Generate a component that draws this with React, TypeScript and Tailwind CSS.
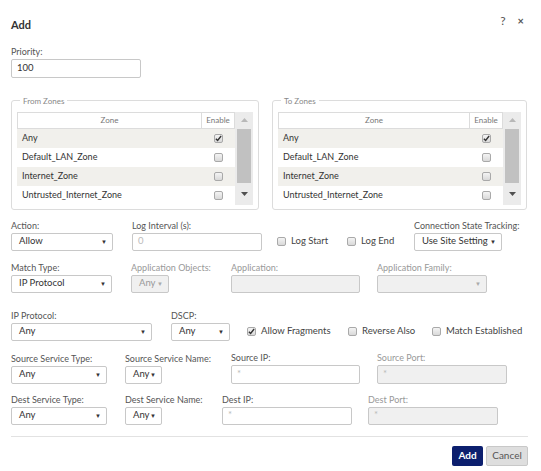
import React from "react";

const font = { fontFamily: "Lato, 'Open Sans', sans-serif" };

function Check({ checked = false }: { checked?: boolean }) {
  return (
    <span className="inline-flex h-[9px] w-[9px] shrink-0 items-center justify-center rounded-[2px] border border-[#a9a9a9] bg-gradient-to-b from-[#f4f4f4] to-[#d9d9d9]">
      {checked && (
        <svg width="7" height="7" viewBox="0 0 8 8">
          <path d="M1 4.2 L3 6.2 L7 1.2" fill="none" stroke="#333" strokeWidth="1.6" />
        </svg>
      )}
    </span>
  );
}

function Select({ value, w, disabled = false }: { value: string; w: string; disabled?: boolean }) {
  return (
    <div
      className={`flex h-[18px] items-center justify-between whitespace-nowrap rounded-[2px] border border-[#c8c8c8] pl-[7px] pr-[5px] text-[9.5px] ${w} ${
        disabled ? "bg-[#f0f0f0] text-[#999]" : "bg-white text-[#333]"
      }`}
    >
      <span>{value}</span>
      <span className={`text-[6px] ${disabled ? "text-[#aaa]" : "text-[#333]"}`}>▼</span>
    </div>
  );
}

function Input({ value, w, disabled = false, dim = false }: { value: string; w: string; disabled?: boolean; dim?: boolean }) {
  return (
    <div
      className={`flex h-[18px] items-center rounded-[2px] border border-[#c8c8c8] pl-[5px] text-[9.5px] ${w} ${
        disabled ? "bg-[#f0f0f0]" : "bg-white"
      } ${dim ? "text-[#bbb]" : "text-[#333]"}`}
    >
      {value}
    </div>
  );
}

function Field({ label, w, gray = false, children }: { label: string; w?: string; gray?: boolean; children: React.ReactNode }) {
  return (
    <div className={`flex shrink-0 flex-col ${w ?? ""}`}>
      <div className={`mb-[2px] whitespace-nowrap text-[9px] leading-[11px] ${gray ? "text-[#999]" : "text-[#555]"}`}>{label}</div>
      {children}
    </div>
  );
}

function CheckLabel({ label, w, checked = false }: { label: string; w?: string; checked?: boolean }) {
  return (
    <div className={`flex h-[18px] shrink-0 items-center gap-[5px] whitespace-nowrap text-[9.5px] text-[#444] ${w ?? ""}`}>
      <Check checked={checked} />
      <span>{label}</span>
    </div>
  );
}

function Zones({ title }: { title: string }) {
  const rows = ["Any", "Default_LAN_Zone", "Internet_Zone", "Untrusted_Internet_Zone"];
  return (
    <fieldset className="h-[114px] rounded-[3px] border border-[#dcdcdc] px-[5px] pt-0">
      <legend className="ml-[3px] px-[3px] text-[8px] leading-[10px] text-[#888]">{title}</legend>
      <div className="mt-[6px] flex">
        <div className="flex-1">
          <div className="flex h-[17px] border border-[#dcdcdc] text-[8px] text-[#777]">
            <div className="flex flex-1 items-center justify-center">Zone</div>
            <div className="flex w-[33px] items-center justify-center border-l border-[#dcdcdc]">Enable</div>
          </div>
          {rows.map((r, i) => (
            <div key={r} className={`flex h-[19px] text-[9px] text-[#333] ${i % 2 === 0 ? "bg-[#f1f0ec]" : "bg-white"}`}>
              <div className="flex flex-1 items-center pl-[5px]">{r}</div>
              <div className="flex w-[33px] items-center justify-center">
                <Check checked={i === 0} />
              </div>
            </div>
          ))}
        </div>
        <div className="flex h-[93px] w-[18px] flex-col items-center bg-[#ebebeb]">
          <div className="flex h-[17px] items-center">
            <svg width="7" height="4" viewBox="0 0 7 4"><path d="M0 4 L3.5 0 L7 4 Z" fill="#b8b8b8" /></svg>
          </div>
          <div className="h-[54px] w-[14px] bg-[#c1c1c1]" />
          <div className="flex flex-1 items-center">
            <svg width="7" height="4" viewBox="0 0 7 4"><path d="M0 0 L7 0 L3.5 4 Z" fill="#505050" /></svg>
          </div>
        </div>
      </div>
    </fieldset>
  );
}

export default function App() {
  return (
    <div className="relative h-[471px] w-[541px] overflow-hidden bg-white" style={font}>
      <div className="flex items-center justify-between pl-[11px] pr-[17px] pt-[9px]">
        <div className="mt-[8px] text-[11px] font-bold text-[#333]">Add</div>
        <div className="flex items-center gap-[12px] text-[#555]">
          <span className="text-[12px]">?</span>
          <span className="text-[11px] font-bold">×</span>
        </div>
      </div>

      <div className="px-[11px]">
        <div className="mt-[12px]">
          <Field label="Priority:">
            <Input value="100" w="w-[130px] h-[19px]" />
          </Field>
        </div>

        <div className="mt-[18px] flex gap-[13px]">
          <div className="w-[248px]">
            <Zones title="From Zones" />
          </div>
          <div className="w-[255px]">
            <Zones title="To Zones" />
          </div>
        </div>

        <div className="mt-[10px] flex items-end">
          <Field label="Action:" w="w-[121px]">
            <Select value="Allow" w="w-[102px]" />
          </Field>
          <Field label="Log Interval (s):" w="w-[145px]">
            <Input value="0" w="w-[130px]" dim />
          </Field>
          <CheckLabel label="Log Start" w="w-[70px]" />
          <CheckLabel label="Log End" w="w-[67px]" />
          <Field label="Connection State Tracking:">
            <Select value="Use Site Setting" w="w-[88px]" />
          </Field>
        </div>

        <div className="mt-[11px] flex items-end">
          <Field label="Match Type:" w="w-[120px]">
            <Select value="IP Protocol" w="w-[101px]" />
          </Field>
          <Field label="Application Objects:" w="w-[100px]" gray>
            <Select value="Any" w="w-[38px]" disabled />
          </Field>
          <Field label="Application:" w="w-[146px]" gray>
            <Input value="" w="w-[129px]" disabled />
          </Field>
          <Field label="Application Family:" gray>
            <Select value="" w="w-[110px]" disabled />
          </Field>
        </div>

        <div className="mt-[17px] flex items-end">
          <Field label="IP Protocol:" w="w-[160px]">
            <Select value="Any" w="w-[141px]" />
          </Field>
          <Field label="DSCP:" w="w-[76px]">
            <Select value="Any" w="w-[59px]" />
          </Field>
          <CheckLabel label="Allow Fragments" w="w-[101px]" checked />
          <CheckLabel label="Reverse Also" w="w-[84px]" />
          <CheckLabel label="Match Established" />
        </div>

        <div className="mt-[11px] flex items-end">
          <Field label="Source Service Type:" w="w-[114px]">
            <Select value="Any" w="w-[96px]" />
          </Field>
          <Field label="Source Service Name:" w="w-[106px]">
            <Select value="Any" w="w-[37px]" />
          </Field>
          <Field label="Source IP:" w="w-[146px]">
            <Input value="*" w="w-[129px] h-[19px]" dim />
          </Field>
          <Field label="Source Port:" gray>
            <Input value="*" w="w-[130px] h-[19px]" disabled dim />
          </Field>
        </div>

        <div className="mt-[10px] flex items-end">
          <Field label="Dest Service Type:" w="w-[114px]">
            <Select value="Any" w="w-[96px]" />
          </Field>
          <Field label="Dest Service Name:" w="w-[97px]">
            <Select value="Any" w="w-[37px]" />
          </Field>
          <Field label="Dest IP:" w="w-[146px]">
            <Input value="*" w="w-[130px]" dim />
          </Field>
          <Field label="Dest Port:" gray>
            <Input value="*" w="w-[130px]" disabled dim />
          </Field>
        </div>

        <div className="mt-[11px] w-[517px] border-t border-[#e2e2e2]" />

        <div className="mt-[9px] flex w-[517px] justify-end gap-[3px]">
          <button className="h-[20px] w-[31px] rounded-[2px] bg-[#0c1f6e] text-[10px] font-bold text-white">Add</button>
          <button className="h-[20px] w-[42px] rounded-[2px] border border-[#c8c8c8] bg-[#dedede] text-[10px] text-[#555]">Cancel</button>
        </div>
      </div>
    </div>
  );
}
